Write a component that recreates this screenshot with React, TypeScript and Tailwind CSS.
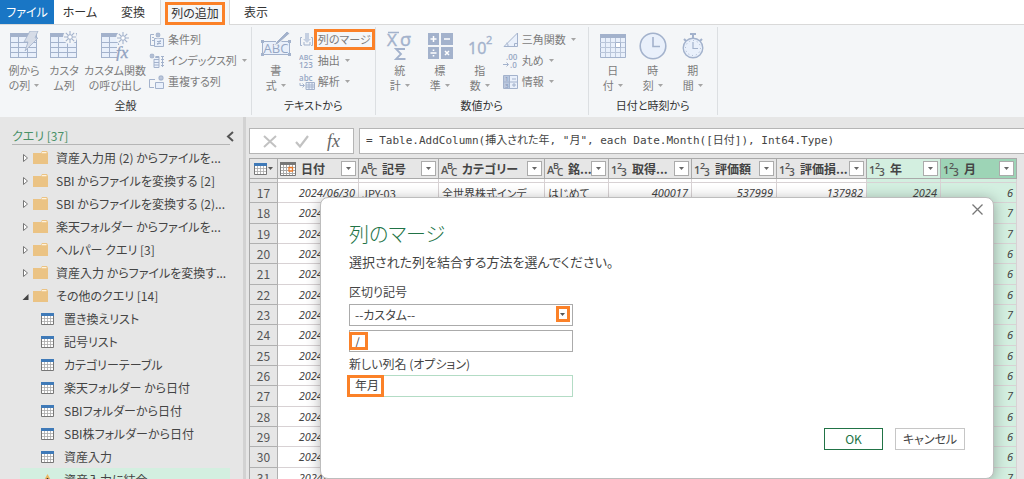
import React, { useState } from "react";
import clsx from "clsx";

const ICON_LINE = "#a3b2cc";
const ICON_FILL = "#e9f0fb";

/* ---------- small shared icons ---------- */

function Caret({ className = "" }: { className?: string }) {
  return (
    <svg viewBox="0 0 5 3" className={clsx("inline-block h-[3px] w-[5px]", className)} aria-hidden="true">
      <path d="M0 0h5L2.5 3z" fill="currentColor" />
    </svg>
  );
}

function Burst({ x, y, r = 7 }: { x: number; y: number; r?: number }) {
  const d = r * 0.7;
  return (
    <g stroke={ICON_LINE} strokeWidth="1.1">
      <circle cx={x} cy={y} r={r + 1} fill="#f4f6f8" stroke="none" />
      <path d={`M${x - r} ${y}h${2 * r}M${x} ${y - r}v${2 * r}M${x - d} ${y - d}l${2 * d} ${2 * d}M${x - d} ${y + d}l${2 * d} ${-2 * d}`} />
      <circle cx={x} cy={y} r={r * 0.38} fill="#fff" strokeWidth="1" />
    </g>
  );
}

function TableBase({ x = 1, w = 25 }: { x?: number; w?: number }) {
  return (
    <g>
      <rect x={x + 0.5} y="2.5" width={w} height="24" fill={ICON_FILL} stroke={ICON_LINE} />
      <rect x={x} y="2" width={w + 1} height="4" fill={ICON_LINE} />
      <path d={`M${x} 11.5h${w}M${x} 16.5h${w}M${x} 21.5h${w}M${x + 8.5} 6v20M${x + 17.5} 6v20`} stroke={ICON_LINE} />
    </g>
  );
}

function BigIcon({ children }: { children: React.ReactNode }) {
  return (
    <svg viewBox="0 0 30 30" className="h-[30px] w-[30px]" fill="none" aria-hidden="true">
      {children}
    </svg>
  );
}

function SmallIcon({ children }: { children: React.ReactNode }) {
  return (
    <svg viewBox="0 0 16 16" className="h-4 w-4 shrink-0" fill="none" aria-hidden="true">
      {children}
    </svg>
  );
}

const icons = {
  examples: (
    <BigIcon>
      <TableBase x={1} w={26} />
      <path d="M21 0h8l-3 7h3L16 20l3-9h-4z" fill="#d6dce7" stroke={ICON_LINE} strokeWidth=".8" />
    </BigIcon>
  ),
  custom: (
    <BigIcon>
      <TableBase x={1} w={26} />
      <Burst x={21} y={6} r={6} />
    </BigIcon>
  ),
  invoke: (
    <BigIcon>
      <TableBase x={1} w={22} />
      <Burst x={23} y={7} r={6} />
      <rect x="17" y="14" width="13" height="16" fill="#f4f6f8" />
      <text x="16" y="27" fontSize="17" fontStyle="italic" fontFamily="Liberation Serif, serif" fill="#8fa1c0" stroke="#8fa1c0" strokeWidth=".3">fx</text>
    </BigIcon>
  ),
  format: (
    <BigIcon>
      <path d="M1.500 10.500h27v13h-27z" fill={ICON_FILL} stroke={ICON_LINE} />
      <path d="M0 9h3v3H0zM27 9h3v3h-3zM0 22h3v3H0zM27 22h3v3h-3z" fill={ICON_LINE} />
      <text x="15" y="22" textAnchor="middle" fontSize="13" fontFamily="Open Sans, sans-serif" fill="#96a7c4">ABC</text>
      <path d="M13 15l2-4L26 0l3 2.500L17 13z" fill={ICON_LINE} stroke="#f4f6f8" />
    </BigIcon>
  ),
  stats: (
    <BigIcon>
      <text x="2" y="15" fontSize="17" fontFamily="Open Sans, sans-serif" fill={ICON_LINE} stroke={ICON_LINE} strokeWidth=".4">X</text>
      <text x="15" y="15" fontSize="18" fontFamily="Open Sans, sans-serif" fill={ICON_LINE} stroke={ICON_LINE} strokeWidth=".4">σ</text>
      <path d="M3 1.500h11" stroke={ICON_LINE} strokeWidth="1.500" />
      <path d="M20 18h-9l5 5-5 5h9.500" stroke={ICON_LINE} strokeWidth="1.800" />
    </BigIcon>
  ),
  standard: (
    <BigIcon>
      <path d="M3 2h11v12H3zM16 2h12v12H16zM3 16h11v12H3zM16 16h12v12H16z" fill={ICON_LINE} />
      <path d="M8.500 5v6M5.500 8h6M19 8h6M5.500 22h6M20 20l4 4M24 20l-4 4" stroke="#fff" strokeWidth="1.500" />
      <path d="M7.700 18.500h1.600v1.600H7.700zM7.700 24h1.600v1.600H7.700z" fill="#fff" />
    </BigIcon>
  ),
  power: (
    <BigIcon>
      <text x="3" y="23" fontSize="16" fontFamily="Open Sans, sans-serif" fill={ICON_LINE} stroke={ICON_LINE} strokeWidth=".4">10</text>
      <text x="21" y="13" fontSize="11" fontFamily="Open Sans, sans-serif" fill={ICON_LINE} stroke={ICON_LINE} strokeWidth=".4">2</text>
    </BigIcon>
  ),
  date: (
    <BigIcon>
      <path d="M2.500 3.500h25v23h-25z" fill={ICON_FILL} stroke={ICON_LINE} />
      <path d="M2 3h26v4H2z" fill={ICON_LINE} />
      <path d="M7.500 7v19M12.500 7v19M17.500 7v19M22.500 7v19M2 11.500h25M2 16.500h25M2 21.500h25" stroke="#bac6da" />
      <path d="M17.500 11.500h5v5h-5z" fill="#fff" stroke={ICON_LINE} />
    </BigIcon>
  ),
  time: (
    <BigIcon>
      <circle cx="15" cy="15" r="12.800" fill={ICON_FILL} stroke={ICON_LINE} strokeWidth="1.600" />
      <path d="M15 6v9.500h7" stroke={ICON_LINE} strokeWidth="1.600" />
    </BigIcon>
  ),
  duration: (
    <BigIcon>
      <path d="M12 3h6M15 3v4M6 8l2 2M24 8l-2 2" stroke={ICON_LINE} strokeWidth="2" />
      <circle cx="15" cy="17" r="9.800" fill={ICON_FILL} stroke={ICON_LINE} strokeWidth="1.400" />
      <path d="M15 11v6.500h5" stroke={ICON_LINE} strokeWidth="1.200" />
      <circle cx="15" cy="17" r="7.500" stroke={ICON_LINE} strokeDasharray="1 2.900" />
    </BigIcon>
  ),
  conditional: (
    <SmallIcon>
      <path d="M5 2.500H1.500v11H5M3 5.500h2M3 8.500h2" stroke={ICON_LINE} />
      <path d="M5.500 6.500h9v8h-9z" fill={ICON_FILL} stroke={ICON_LINE} />
      <path d="M8 9.500h4M8 11.500h4M11.500 8l-3 5" stroke={ICON_LINE} />
      <Burst x={9} y={3} r={2.5} />
    </SmallIcon>
  ),
  index: (
    <SmallIcon>
      <path d="M5 3.500h5v11H5z" fill={ICON_FILL} stroke={ICON_LINE} />
      <path d="M5 6.500h5M5 9.500h5M5 12h5M12 3.500h3M12 6.500h3M12 9.500h3M12 12.500h3M13.500 3v11" stroke={ICON_LINE} />
      <path d="M5 3h5v2H5z" fill={ICON_LINE} />
      <Burst x={3} y={3} r={2.5} />
    </SmallIcon>
  ),
  duplicate: (
    <SmallIcon>
      <path d="M6 5.500H.500v8H5" stroke={ICON_LINE} />
      <path d="M6.500 8.500h8v6h-8z" fill={ICON_FILL} stroke={ICON_LINE} />
      <Burst x={12} y={4} r={3} />
    </SmallIcon>
  ),
  merge: (
    <SmallIcon>
      <path d="M3 5.500H1.500v8H3M12 5.500h1.500v8H12" stroke={ICON_LINE} />
      <path d="M6 1h4v6h2l-4 4-4-4h2z" fill="#c5d0e2" />
      <path d="M5 10v3h6v-3" stroke={ICON_LINE} />
    </SmallIcon>
  ),
  extract: (
    <SmallIcon>
      <text x="0" y="7" fontSize="7" fontWeight="600" fontFamily="Open Sans, sans-serif" fill="#96a7c4">ABC</text>
      <text x="0" y="15" fontSize="8" fontWeight="600" fontFamily="Open Sans, sans-serif" fill="#96a7c4">123</text>
    </SmallIcon>
  ),
  parse: (
    <SmallIcon>
      <text x="0" y="7" fontSize="8" fontWeight="600" fontFamily="Open Sans, sans-serif" fill="#96a7c4">abc</text>
      <path d="M1 9v2.500h4M3.500 9.500l2 2-2 2" stroke={ICON_LINE} />
      <path d="M7 8.500h8.500v7H7zM7 11h8M7 13h8M10 8v7M13 8v7" fill={ICON_FILL} stroke={ICON_LINE} />
    </SmallIcon>
  ),
  trig: (
    <SmallIcon>
      <path d="M1 14.500L14.500 1v13.500z" fill={ICON_FILL} stroke={ICON_LINE} />
      <path d="M5 14c0-2-.500-2.500-1.500-3M11.500 14.500v-3h3" stroke={ICON_LINE} />
    </SmallIcon>
  ),
  round: (
    <SmallIcon>
      <text x="3" y="7" fontSize="8" fontWeight="600" fontFamily="Open Sans, sans-serif" fill="#96a7c4">.00</text>
      <text x="7" y="15" fontSize="8" fontWeight="600" fontFamily="Open Sans, sans-serif" fill="#96a7c4">.0</text>
      <path d="M0 11.500h5M3.500 9.500l2 2-2 2" stroke={ICON_LINE} />
    </SmallIcon>
  ),
  info: (
    <SmallIcon>
      <path d="M.500 1.500h14v13H.500z" fill={ICON_FILL} stroke={ICON_LINE} />
      <path d="M1 2h5v12H1z" fill="#bac8df" />
      <path d="M6.500 2v12M1 8h13M9 5h4M9 11h4M11 9v4" stroke={ICON_LINE} />
      <text x="2" y="7" fontSize="6" fontFamily="Open Sans, sans-serif" fill="#7f92b4">1</text>
      <text x="2" y="14" fontSize="6" fontFamily="Open Sans, sans-serif" fill="#7f92b4">3</text>
    </SmallIcon>
  ),
};

type IconName = keyof typeof icons;

function GridIcon({ className = "" }: { className?: string }) {
  return (
    <svg viewBox="0 0 13 12" className={clsx("h-3 w-[13px] shrink-0", className)} aria-hidden="true">
      <path d="M.5.5h12v11H.5z" fill="#fff" stroke="#777" />
      <path d="M0 0h13v3H0z" fill="#3f7ab8" />
      <path d="M3.500 3v8M6.500 3v8M9.500 3v8M1 5.500h11M1 8.500h11" stroke="#aaa" strokeWidth=".8" />
    </svg>
  );
}

function TypeIcon({ type }: { type: string }) {
  if (type === "date") {
    return (
      <svg viewBox="0 0 16 14" className="h-3.5 w-4 shrink-0" aria-hidden="true">
        <path d="M.5.5h15v13H.5z" fill="#fff" stroke="#777" />
        <path d="M0 0h16v3H0z" fill="#777" />
        <path d="M3.500 3v10M6.500 3v10M9.500 3v10M12.500 3v10M1 5.500h14M1 8.500h14M1 11.500h14" stroke="#aaa" />
        <path d="M9 5.500h3.500v3.500H9z" fill="#fff" stroke="#e8792b" strokeWidth="1.300" />
      </svg>
    );
  }
  const [a, b, c] = type === "text" ? ["A", "B", "C"] : ["1", "2", "3"];
  return (
    <svg viewBox="0 0 16 16" className="h-4 w-4 shrink-0 overflow-visible" fill="#555" fontFamily="Open Sans, sans-serif" fontWeight="600" aria-hidden="true">
      <text x="0" y="13" fontSize="11">{a}</text>
      <text x="6" y="8" fontSize="9">{b}</text>
      <text x="10" y="15" fontSize="10">{c}</text>
    </svg>
  );
}

/* ---------- ribbon ---------- */

function BigButton({ icon, lines, menu, wide }: { icon: IconName; lines: [string, string]; menu?: boolean; wide?: boolean }) {
  return (
    <button className={clsx("flex flex-col items-center pt-0.5 text-[11px] leading-[15px] text-[#7c7c7c]", wide ? "w-[62px]" : "w-10")}>
      {icons[icon]}
      <span className="mt-0.5 whitespace-nowrap">{lines[0]}</span>
      <span className="flex items-center gap-1 whitespace-nowrap">
        {lines[1]}
        {menu && <Caret className="text-[#a5a5a5]" />}
      </span>
    </button>
  );
}

function SmallButton({ icon, label, menu, marked }: { icon: IconName; label: string; menu?: boolean; marked?: boolean }) {
  return (
    <button className="relative flex h-[21px] items-center gap-[3px] whitespace-nowrap text-[11px] text-[#7c7c7c]">
      {icons[icon]}
      <span>{label}</span>
      {menu && <Caret className="ml-0.5 text-[#a5a5a5]" />}
      {marked && <Mark className="-right-1 left-[15px] inset-y-0" />}
    </button>
  );
}

function Mark({ className }: { className: string }) {
  return <span className={clsx("pointer-events-none absolute border-[3px] border-[#fb8128]", className)} />;
}

function Group({ title, children }: { title: string; children: React.ReactNode }) {
  return (
    <section className="my-0.5 flex flex-col justify-between border-r border-[#dcdfe2] px-1">
      <div className="flex gap-[3px] pt-0.5">{children}</div>
      <h2 className="text-center text-[11px] leading-5 text-[#333]">{title}</h2>
    </section>
  );
}

function Ribbon() {
  return (
    <div className="flex h-[93px] shrink-0 border-t border-[#d9d9d9] bg-[#f4f6f8]">
      <Group title="全般">
        <div className="flex">
          <BigButton icon="examples" lines={["例から", "の列"]} menu />
          <BigButton icon="custom" lines={["カスタ", "ム列"]} />
          <BigButton icon="invoke" lines={["カスタム関数", "の呼び出し"]} wide />
        </div>
        <div>
          <SmallButton icon="conditional" label="条件列" />
          <SmallButton icon="index" label="インデックス列" menu />
          <SmallButton icon="duplicate" label="重複する列" />
        </div>
      </Group>
      <Group title="テキストから">
        <BigButton icon="format" lines={["書", "式"]} menu />
        <div>
          <SmallButton icon="merge" label="列のマージ" marked />
          <SmallButton icon="extract" label="抽出" menu />
          <SmallButton icon="parse" label="解析" menu />
        </div>
      </Group>
      <Group title="数値から">
        <div className="flex">
          <BigButton icon="stats" lines={["統", "計"]} menu />
          <BigButton icon="standard" lines={["標", "準"]} menu />
          <BigButton icon="power" lines={["指", "数"]} menu />
        </div>
        <div className="pr-2">
          <SmallButton icon="trig" label="三角関数" menu />
          <SmallButton icon="round" label="丸め" menu />
          <SmallButton icon="info" label="情報" menu />
        </div>
      </Group>
      <Group title="日付と時刻から">
        <div className="flex">
          <BigButton icon="date" lines={["日", "付"]} menu />
          <BigButton icon="time" lines={["時", "刻"]} menu />
          <BigButton icon="duration" lines={["期", "間"]} menu />
        </div>
      </Group>
    </div>
  );
}

function Tabs() {
  return (
    <nav className="flex h-6 shrink-0 bg-white text-xs text-[#333]">
      <button className="w-[54px] bg-[#1976c5] text-white">ファイル</button>
      <button className="w-[52px]">ホーム</button>
      <button className="w-[54px]">変換</button>
      <button className="relative -mb-px w-[70px] border-x border-[#d9d9d9] bg-[#f4f6f8]">
        列の追加
        <Mark className="inset-x-1 top-0.5 bottom-0" />
      </button>
      <button className="w-[52px]">表示</button>
    </nav>
  );
}

/* ---------- query list ---------- */

const folders = [
  "資産入力用 (2) からファイルを...",
  "SBI からファイルを変換する [2]",
  "SBI からファイルを変換する (2)...",
  "楽天フォルダー からファイルを...",
  "ヘルパー クエリ [3]",
  "資産入力 からファイルを変換す...",
  "その他のクエリ [14]",
];

const queries = ["置き換えリスト", "記号リスト", "カテゴリーテーブル", "楽天フォルダー から日付", "SBIフォルダーから日付", "SBI株フォルダーから日付", "資産入力"];

function QueryPane() {
  return (
    <aside className="w-[246px] shrink-0 border-r-[3px] border-[#d2d2d2] pl-3 pt-2.5 text-xs text-[#444]">
      <div className="flex items-start">
        <h2 className="mb-px w-[218px] border-b border-[#b5b5b5] text-[#4a9168] leading-[17px]">クエリ [37]</h2>
        <button aria-label="折りたたむ" className="-ml-1 mt-1">
          <svg viewBox="0 0 8 11" className="h-[11px] w-2" fill="none">
            <path d="M7 1L2 5.500l5 4.500" stroke="#555" strokeWidth="2" />
          </svg>
        </button>
      </div>
      <ul>
        {folders.map((name, i) => {
          const open = i === folders.length - 1;
          return (
            <li key={name} className="flex h-[23px] items-center whitespace-nowrap pl-2.5">
              <svg viewBox="0 0 7 10" className="h-2.5 w-[7px]" aria-hidden="true">
                {open ? <path d="M6.500 3v6H.500z" fill="#444" /> : <path d="M1.500 1.500v7l4-3.500z" fill="#fff" stroke="#777" />}
              </svg>
              <svg viewBox="0 0 15 13" className="ml-1 h-[13px] w-[15px]" aria-hidden="true">
                <path d="M0 2h8l1-2h5l1 2v11H0z" fill="#ebc384" />
                <path d="M9 1h4.500v1.200H8.500z" fill="#fff3dd" />
              </svg>
              <span className="ml-2">{name}</span>
            </li>
          );
        })}
        {queries.map((name) => (
          <li key={name} className="flex h-[23px] items-center gap-2.5 whitespace-nowrap pl-[29px]">
            <GridIcon />
            {name}
          </li>
        ))}
        <li className="ml-2 mr-[13px] flex h-[23px] items-center gap-2.5 whitespace-nowrap bg-[#d3efe0] pl-[21px]">
          <svg viewBox="0 0 13 12" className="h-3 w-[13px] shrink-0" aria-hidden="true">
            <path d="M6.500 0L13 12H0z" fill="#ebb55f" />
            <path d="M6.500 4v4M6.500 9v1.500" stroke="#333" strokeWidth="1.500" />
          </svg>
          資産入力に結合
        </li>
      </ul>
    </aside>
  );
}

/* ---------- data preview ---------- */

const columns = [
  { name: "日付", type: "date", width: "w-[81px]" },
  { name: "記号", type: "text", width: "w-[80px]" },
  { name: "カテゴリー", type: "text", width: "w-[106px]" },
  { name: "銘...", type: "text", width: "w-[64px]" },
  { name: "取得...", type: "number", width: "w-[83px]" },
  { name: "評価額", type: "number", width: "w-[85px]" },
  { name: "評価損...", type: "number", width: "w-[90px]" },
  { name: "年", type: "number", width: "w-[74px]" },
  { name: "月", type: "number", width: "w-[76px]" },
];

const months = [6, 7, 7, 6, 6, 6, 7, 6, 6, 6, 7, 6, 6, 6, 7];

const rows = months.map((month, i) => [
  `2024/0${month}/30`,
  "JPY-03",
  "全世界株式インデ",
  "はじめて",
  "400017",
  "537999",
  "137982",
  "2024",
  String(month),
].map((value) => ({ id: 17 + i, value })));

function DataTable() {
  return (
    <table className="mt-1 w-[768px] table-fixed border-separate border-spacing-0 border-l border-t border-[#a9a9a9] text-[11px] text-[#444]">
      <thead>
        <tr className="h-5">
          <th className="w-7 border-b border-r border-[#a9a9a9] bg-[#e6e6e6] p-0">
            <button aria-label="テーブル" className="flex items-center gap-px pl-1">
              <GridIcon />
              <Caret className="text-[#555]" />
            </button>
          </th>
          {columns.map((col, i) => (
            <th
              key={col.name}
              className={clsx(
                "border-b border-r border-[#a9a9a9] p-0",
                col.width,
                i === 7 ? "bg-[#d3efe0]" : i === 8 ? "bg-[#9dd4b6]" : "bg-[#e6e6e6]"
              )}
            >
              <div className="flex items-center pl-0.5 pr-0.5 text-xs leading-4">
                <TypeIcon type={col.type} />
                <span className="ml-[5px] flex-1 overflow-hidden whitespace-nowrap text-left">{col.name}</span>
                <button aria-label={col.name} className="flex h-[15px] w-[15px] shrink-0 items-center justify-center border border-[#ababab] bg-white">
                  <Caret className="text-[#666]" />
                </button>
              </div>
            </th>
          ))}
        </tr>
      </thead>
      <tbody>
        <tr className="h-1">
          <td className="border-b border-r border-[#b5b5b5] bg-[#e6e6e6] p-0" />
          {columns.map((col, i) => (
            <td key={col.name} className={clsx("border-b border-r border-[#d8d2d4] p-0", i > 6 ? "bg-[#d3efe0]" : "bg-white")} />
          ))}
        </tr>
        {rows.map((cells) => (
          <tr key={cells[0].id} className="h-5 nth-[3n]:h-[21px]">
            <td className="border-b border-r border-[#b0b0b0] bg-[#e6e6e6] p-0 text-center text-xs leading-[18px] text-[#555]">{cells[0].id}</td>
            {cells.map((cell, i) => (
              <td
                key={i}
                className={clsx(
                  "overflow-hidden whitespace-nowrap border-b border-r border-[#d8d2d4] px-[3px] py-0 leading-[18px]",
                  i > 6 ? "bg-[#d3efe0]" : "bg-white",
                  (i === 0 || i > 3) && "text-right font-['Noto_Sans'] italic"
                )}
              >
                {cell.value}
              </td>
            ))}
          </tr>
        ))}
      </tbody>
    </table>
  );
}

function FormulaBar() {
  const [formula, setFormula] = useState('= Table.AddColumn(挿入された年, "月", each Date.Month([日付]), Int64.Type)');

  return (
    <div className="flex h-[26px] gap-[5px]">
      <div className="flex w-[105px] shrink-0 items-center justify-around border border-[#b5b5b5] bg-white px-1">
        <button aria-label="キャンセル">
          <svg viewBox="0 0 14 13" className="h-[13px] w-3.5" fill="none">
            <path d="M1 1l12 11M13 1L1 12" stroke="#c2c2c2" strokeWidth="2" />
          </svg>
        </button>
        <button aria-label="確定">
          <svg viewBox="0 0 14 13" className="h-[13px] w-3.5" fill="none">
            <path d="M1 7l4 4.500L13 1" stroke="#c2c2c2" strokeWidth="2.200" />
          </svg>
        </button>
        <span className="font-['Liberation_Serif'] text-lg italic leading-5 text-[#666]">fx</span>
      </div>
      <input
        aria-label="数式"
        value={formula}
        onChange={(e) => setFormula(e.target.value)}
        className="min-w-0 flex-1 border border-r-0 border-[#b5b5b5] bg-white px-1.5 font-['DejaVu_Sans_Mono','Noto_Sans_CJK_JP',monospace] text-[11px] text-[#444] outline-none"
      />
    </div>
  );
}

/* ---------- dialog ---------- */

function MergeDialog() {
  const [separator, setSeparator] = useState("/");
  const [columnName, setColumnName] = useState("年月");

  return (
    <form
      role="dialog"
      aria-labelledby="merge-title"
      onSubmit={(e) => e.preventDefault()}
      className="absolute left-[320px] right-[30px] top-[197px] rounded-lg border border-[#bdbdbd] bg-white pb-7 pl-7 pr-7 pt-[22px] text-[#444] shadow-[0_2px_14px_rgba(0,0,0,0.3)]"
    >
      <button type="button" aria-label="閉じる" className="absolute right-2.5 top-1.5">
        <svg viewBox="0 0 11 11" className="h-[11px] w-[11px]" fill="none">
          <path d="M.500.500l10 10M10.500.500l-10 10" stroke="#777" strokeWidth="1.300" />
        </svg>
      </button>
      <h1 id="merge-title" className="text-xl font-light leading-7 text-[#217346]">列のマージ</h1>
      <p className="mt-1 text-[13px] leading-5">選択された列を結合する方法を選んでください。</p>

      <div className="mt-3 flex w-56 flex-col text-xs">
        <label htmlFor="separator-kind" className="leading-4">区切り記号</label>
        <div className="relative mt-1 h-[22px]">
          <select id="separator-kind" className="h-full w-full appearance-none border border-[#ababab] bg-white px-[5px] outline-none">
            <option>--カスタム--</option>
          </select>
          <Mark className="right-[3px] top-0.5 h-4 w-3.5" />
          <Caret className="pointer-events-none absolute right-2 top-[9px] text-[#555]" />
        </div>
        <div className="relative mt-1 h-[22px]">
          <input
            aria-label="カスタム区切り記号"
            value={separator}
            onChange={(e) => setSeparator(e.target.value)}
            className="h-full w-full border border-[#ababab] px-[5px] outline-none"
          />
          <Mark className="left-0 top-0.5 h-[18px] w-[19px]" />
        </div>
        <label htmlFor="column-name" className="mt-1 leading-4">新しい列名 (オプション)</label>
        <div className="relative mt-[3px] h-[22px]">
          <input
            id="column-name"
            value={columnName}
            onChange={(e) => setColumnName(e.target.value)}
            className="h-full w-full border border-[#b3dcc5] px-[5px] pb-1 outline-none"
          />
          <Mark className="-left-0.5 inset-y-0 w-[37px]" />
        </div>
      </div>

      <div className="mt-[31px] flex justify-end gap-3 text-xs">
        <button type="submit" className="h-[22px] w-[59px] border border-[#217346] text-[#217346]">OK</button>
        <button type="button" className="h-[22px] w-[70px] border border-[#c6c6c6]">キャンセル</button>
      </div>
    </form>
  );
}

export default function App() {
  return (
    <div className="relative flex h-screen flex-col overflow-hidden bg-[#e6e6e6] font-['Noto_Sans_CJK_JP',sans-serif] [font-feature-settings:'palt']">
      <Tabs />
      <Ribbon />
      <div className="flex min-h-0 flex-1">
        <QueryPane />
        <main className="min-w-0 flex-1 overflow-hidden pl-[3px] pt-[11px]">
          <FormulaBar />
          <DataTable />
        </main>
      </div>
      <MergeDialog />
    </div>
  );
}
